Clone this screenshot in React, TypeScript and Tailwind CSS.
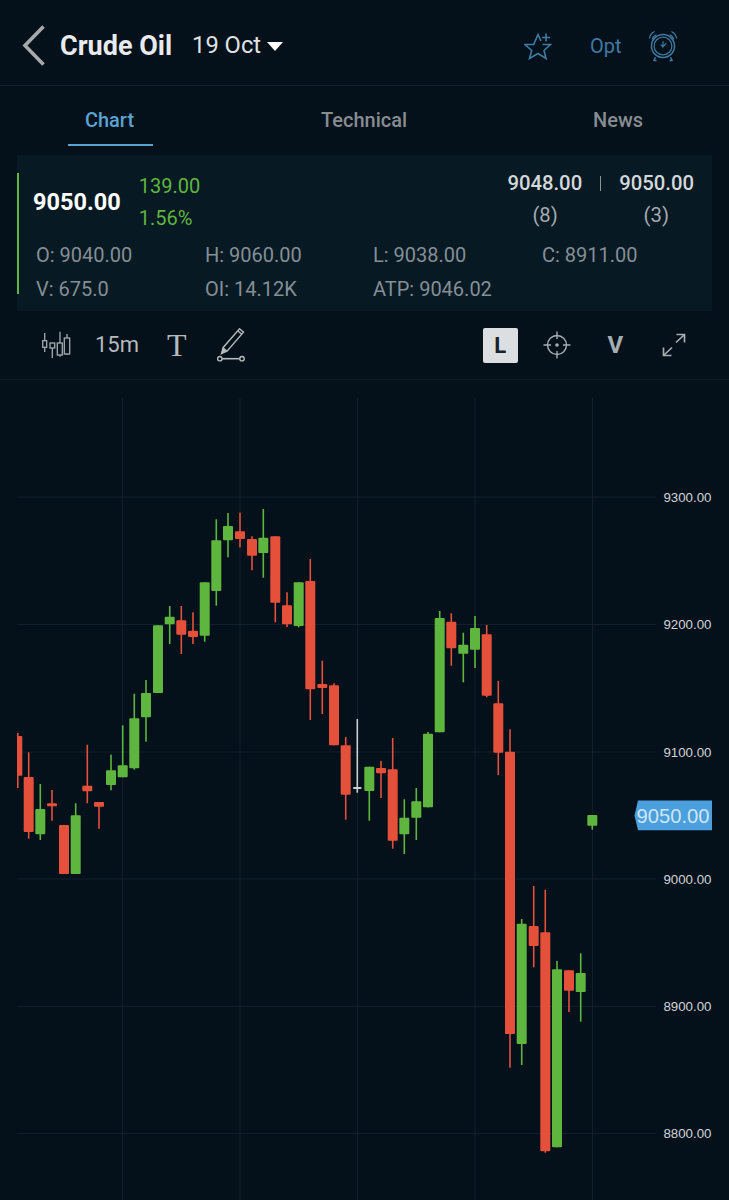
import React from "react";

type Candle = [number, number, number, number, number, "r" | "g" | "w"];

// cx, wick top, wick bottom, body top, body bottom, colour
const candles: Candle[] = [
  [17.3, 733, 788, 736, 775.7, "r"],
  [28.7, 752.3, 838.7, 777, 832, "r"],
  [40.3, 784, 840, 809, 834.3, "g"],
  [52, 790, 820.7, 803.3, 806.3, "r"],
  [64, 825, 874, 825, 874, "r"],
  [75.7, 803.3, 874, 815.3, 874, "g"],
  [87.3, 744.7, 803.3, 785.7, 791.3, "r"],
  [99, 802, 828.7, 802, 806.7, "r"],
  [111, 754.7, 790.3, 770.3, 785, "g"],
  [122.7, 725.3, 777.3, 765.3, 777.3, "g"],
  [134.3, 693.7, 769.7, 718.3, 768.3, "g"],
  [146, 680, 741.7, 693, 717.3, "g"],
  [158, 625.3, 693, 625.3, 693, "g"],
  [169.7, 606, 644, 616.7, 624.3, "g"],
  [181.3, 606, 654, 620.3, 634.7, "r"],
  [193, 612.3, 644, 630.7, 637, "r"],
  [204.7, 582.3, 641.7, 582.3, 635.7, "g"],
  [216.3, 519.3, 605.7, 540.3, 591, "g"],
  [228, 513, 557.3, 526, 540.3, "g"],
  [240, 512.7, 547.3, 531.3, 539, "r"],
  [252, 536.3, 570.3, 539, 555.7, "r"],
  [263.3, 509, 577.7, 537.7, 553, "g"],
  [275.3, 536.3, 622.3, 536.3, 602.7, "r"],
  [287, 592.3, 627, 605.3, 624.3, "r"],
  [298.7, 582.3, 627.3, 582.3, 626, "g"],
  [310.3, 559, 720, 581, 689.3, "r"],
  [322.3, 660.7, 714, 684, 688, "r"],
  [334, 683.3, 745.3, 685.3, 745.3, "r"],
  [345.7, 737, 819.7, 745.3, 794.7, "r"],
  [357.3, 719, 792.7, 787, 789, "w"],
  [369.3, 766.7, 820.7, 766.7, 791, "g"],
  [381, 761, 798, 768, 773.3, "r"],
  [392.7, 738, 848.7, 769.3, 840.7, "r"],
  [404.3, 799.3, 854, 817.7, 834.3, "g"],
  [416.3, 788, 840, 801.3, 817.7, "g"],
  [428, 732, 807.3, 733.7, 807.3, "g"],
  [439.7, 611, 732.3, 618, 732.3, "g"],
  [451.3, 613.3, 665.7, 621.7, 648.3, "r"],
  [463.3, 632.7, 682.3, 644.7, 653.7, "g"],
  [475, 616, 668, 628, 649.7, "g"],
  [486.7, 625, 697.3, 634.3, 695.7, "r"],
  [498.3, 681, 775, 703.3, 752.7, "r"],
  [510, 729.3, 1067.7, 751.7, 1034, "r"],
  [521.7, 919, 1065, 923.7, 1044, "g"],
  [533.7, 886, 967.3, 926, 946, "r"],
  [545.3, 889.7, 1152.7, 932.3, 1151.3, "r"],
  [557, 961, 1147.3, 969.3, 1147.3, "g"],
  [569, 970.3, 1012, 970.3, 990.7, "r"],
  [580.7, 953.3, 1021.7, 973, 992, "g"],
  [592.3, 815, 829.7, 815, 825.7, "g"],
];

const colours = { r: "#e5503b", g: "#5fb63f", w: "#c9d0d4" };

const levels = [
  { y: 497, label: "9300.00" },
  { y: 624.5, label: "9200.00" },
  { y: 752, label: "9100.00" },
  { y: 879, label: "9000.00" },
  { y: 1006.5, label: "8900.00" },
  { y: 1133.5, label: "8800.00" },
];

const verticals = [122.5, 240, 357.5, 475, 592.5];

function Chart() {
  return (
    <svg viewBox="0 380 729 820" className="block w-[729px] h-[820px]">
      {levels.map((l) => (
        <line key={l.y} x1={17} x2={656} y1={l.y} y2={l.y} stroke="#0f202c" strokeWidth={1} />
      ))}
      {verticals.map((x) => (
        <line key={x} x1={x} x2={x} y1={398} y2={1200} stroke="#0f202c" strokeWidth={1} />
      ))}
      {candles.map(([cx, wt, wb, bt, bb, c]) => {
        const half = c === "w" ? 4.3 : 5;
        const left = Math.max(17, cx - half);
        return (
          <g key={cx} fill={colours[c]}>
            <rect x={Math.max(17, cx - 0.8)} y={wt} width={1.6} height={wb - wt} />
            <rect x={left} y={bt} width={cx + half - left} height={bb - bt} rx={1} />
          </g>
        );
      })}
      {levels.map((l) => (
        <text
          key={l.label}
          x={711.5}
          y={l.y + 4.7}
          textAnchor="end"
          fill="#d0d4d7"
          fontSize={13.3}
          fontFamily="'Liberation Sans', sans-serif"
        >
          {l.label}
        </text>
      ))}
      <polygon points="638,800.5 712,800.5 712,830.3 638,830.3 634.5,815.5" fill="#4a9fdc" />
      <text
        x={709.5}
        y={823}
        textAnchor="end"
        fill="#cfe6f6"
        fontSize={20.2}
        fontFamily="'Liberation Sans', sans-serif"
      >
        9050.00
      </text>
    </svg>
  );
}

function StarPlus() {
  return (
    <svg width="28" height="27" viewBox="0 0 28 27" fill="none" stroke="#3f7ba3" strokeWidth="1.6">
      <path d="M17 8 L14 1.5 L9.7 11.5 L1 11.5 L7.7 17.5 L5.5 25.5 L14 20.5 L22 25.5 L20 17.5 L26.5 11.5 L18.5 11.5" />
      <path d="M18 4.5 H26 M22 .5 V8.5" />
    </svg>
  );
}

function AlarmClock() {
  return (
    <svg width="30" height="32" viewBox="0 0 32 34" fill="none" stroke="#3f7ba3" strokeWidth="1.3">
      <circle cx="16" cy="17" r="12.3" strokeWidth="1.6" />
      <circle cx="16" cy="17" r="9.5" />
      <path d="M16 12 V18 L19.5 14 M16 18 L13.5 15.5" />
      <path d="M1.5 9 C2 5.5 4 3 7 1.5 M4.5 10 C5 7.5 6.5 6 9 5" />
      <path d="M30.5 9 C30 5.5 28 3 25 1.5 M27.5 10 C27 7.5 25.5 6 23 5" />
      <path d="M8 29 L6 33 M24 29 L26 33 M6 32.5 H9 M23 32.5 H26" strokeWidth="1.6" />
    </svg>
  );
}

function CandleIcon() {
  return (
    <svg width="29" height="28" viewBox="0 0 29 28" fill="none" stroke="#a3abb0" strokeWidth="1.3">
      <path d="M2.7 2 V21 M10.3 11.7 V27 M18 .7 V25.7 M25 3 V24" />
      <rect x="0.7" y="9.7" width="4" height="6.6" fill="#06131c" />
      <rect x="8" y="12" width="4.7" height="5" fill="#06131c" />
      <rect x="15.3" y="12" width="5" height="12" fill="#06131c" />
      <rect x="22.3" y="7" width="5.4" height="16" fill="#06131c" />
    </svg>
  );
}

function PencilLine() {
  return (
    <svg width="29" height="34" viewBox="0 0 29 34" fill="none" stroke="#b4babe" strokeWidth="1.4">
      <path d="M4.7 25.3 L6 19.7 L22.5 .8 L26.5 4.2 L10 23.2 Z" />
      <path d="M20.7 2.8 L24.7 6.3 M6 19.7 L10 23.2" />
      <path d="M4.7 25.3 L6.5 21.5 L8.5 23.2 Z" fill="#b4babe" />
      <path d="M5 30.7 H22.8" strokeWidth="1.6" />
      <circle cx="2.8" cy="30.7" r="2.2" />
      <circle cx="25" cy="30.7" r="2.2" />
    </svg>
  );
}

function Crosshair() {
  return (
    <svg width="28" height="28" viewBox="0 0 28 28" fill="none" stroke="#a6adb2" strokeWidth="1.4">
      <circle cx="14" cy="14" r="9.5" />
      <path d="M14 0.5 V8 M14 20 V27.5 M0.5 14 H8 M20 14 H27.5" />
      <circle cx="14" cy="14" r="1.8" fill="#a6adb2" stroke="none" />
    </svg>
  );
}

function Expand() {
  return (
    <svg width="24" height="24" viewBox="0 0 24 24" fill="none" stroke="#a6adb2" strokeWidth="1.7">
      <path d="M14 9.5 L22.5 1.5 M14.5 1.5 H22.5 V9.5" />
      <path d="M10 14.5 L1.5 22.5 M1.5 14.5 V22.5 H9.5" />
    </svg>
  );
}

export default function App() {
  return (
    <div className="w-[729px] h-[1200px] overflow-hidden bg-[#04101a] font-['Roboto',sans-serif]">
      {/* header */}
      <div className="h-[86px] flex items-center border-b border-[#11232f] pl-[22px] pt-[7px]">
        <svg width="24" height="41" viewBox="0 0 24 41" fill="none" stroke="#a7a9aa" strokeWidth="3.6" className="-mt-[1px]">
          <path d="M21.5 1.5 L3 20.5 L21.5 39.5" />
        </svg>
        <span className="ml-[14px] text-[27px] leading-none font-bold text-[#e8eaeb]">Crude Oil</span>
        <span className="ml-[20px] text-[23.7px] leading-none text-[#dfe2e3]">19 Oct</span>
        <div className="ml-[6px] w-0 h-0 border-x-[8px] border-x-transparent border-t-[9px] border-t-white" />
        <div className="ml-[241px]">
          <StarPlus />
        </div>
        <span className="ml-[38px] text-[20px] leading-none text-[#3f7ba3]">Opt</span>
        <div className="ml-[26px]">
          <AlarmClock />
        </div>
      </div>

      {/* tabs */}
      <div className="h-[60px] flex pl-[68px] text-[20px] font-medium text-[#868d91]">
        <div className="w-[85px] flex items-center justify-center border-b-2 border-[#5aa3d3] text-[#5aa3d3] pt-[10px] pr-[2px]">
          Chart
        </div>
        <div className="ml-[168px] flex items-center pt-[8px] h-[60px]">Technical</div>
        <div className="ml-[186px] flex items-center pt-[8px] h-[60px]">News</div>
      </div>

      {/* quote panel */}
      <div className="mx-[17px] mt-[9px] h-[156px] bg-[#071923] relative">
        <div className="absolute left-0 top-[18px] w-[1.5px] h-[121px] bg-[#5fb63f]" />
        <div className="flex pt-[15px] pl-[16px] pr-[18px] h-[90px]">
          <div className="self-center -mt-[9px] text-[23.5px] leading-none font-bold text-white">9050.00</div>
          <div className="ml-[18px] text-[20px] leading-[32px] text-[#5fb63f]">
            <div>139.00</div>
            <div>1.56%</div>
          </div>
          <div className="ml-auto -mt-[3px] text-[20.3px] leading-[32px] text-[#d4d8da]">
            <div className="flex items-center font-medium">
              <span>9048.00</span>
              <span className="mx-[18px] w-[1px] h-[15px] bg-[#8b9499]" />
              <span>9050.00</span>
            </div>
            <div className="flex justify-between text-[#a3aaae] px-[25px]">
              <span>(8)</span>
              <span>(3)</span>
            </div>
          </div>
        </div>
        <div className="grid grid-cols-[169px_168px_169px_1fr] pl-[19px] text-[20px] leading-[34px] -mt-[7px] text-[#848f96]">
          <span>O: 9040.00</span>
          <span>H: 9060.00</span>
          <span>L: 9038.00</span>
          <span>C: 8911.00</span>
          <span>V: 675.0</span>
          <span>OI: 14.12K</span>
          <span>ATP: 9046.02</span>
        </div>
      </div>

      {/* chart toolbar */}
      <div className="h-[69px] flex items-center border-b border-[#0c1c27] pl-[42px]">
        <CandleIcon />
        <span className="ml-[24px] text-[22px] leading-none text-[#b4babe]">15m</span>
        <span className="ml-[28px] text-[32px] leading-none font-['Liberation_Serif',serif] text-[#b4babe]">T</span>
        <div className="ml-[30px]">
          <PencilLine />
        </div>
        <div className="ml-[237px] w-[35px] h-[35px] rounded-[2px] bg-[#dcdfe1] flex items-center justify-center text-[22px] font-bold text-[#18222a]">
          L
        </div>
        <div className="ml-[25px]">
          <Crosshair />
        </div>
        <span className="ml-[37px] text-[24px] leading-none font-bold text-[#a6adb2]">V</span>
        <div className="ml-[39px]">
          <Expand />
        </div>
      </div>

      <Chart />
    </div>
  );
}
